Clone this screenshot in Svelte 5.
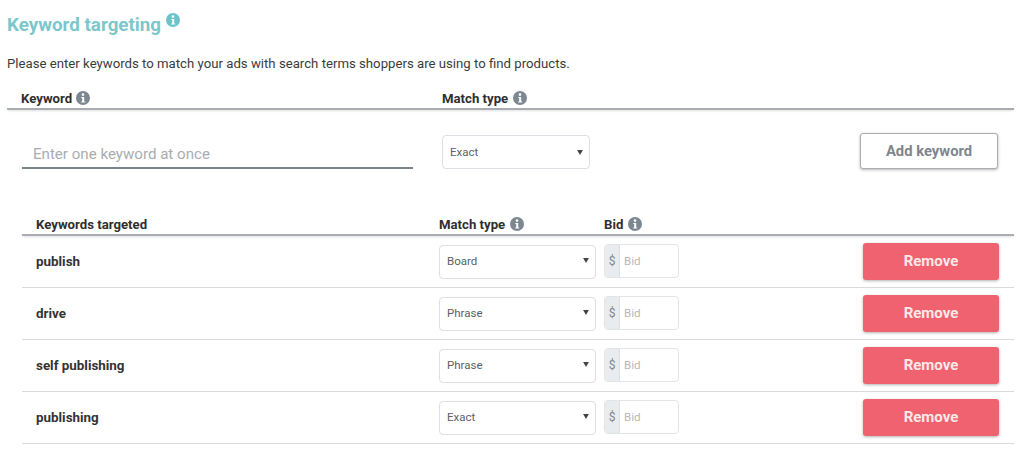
<script>
  const rows = [
    { name: 'publish', match: 'Board' },
    { name: 'drive', match: 'Phrase' },
    { name: 'self publishing', match: 'Phrase' },
    { name: 'publishing', match: 'Exact' }
  ];
</script>

{#snippet info(cls)}
  <svg class="info {cls}" viewBox="0 0 14 14" aria-hidden="true">
    <circle cx="7" cy="7" r="7" fill="currentColor" />
    <circle cx="7" cy="3.6" r="1.3" fill="#fff" />
    <path d="M5.3 6h2.9v4.4h1v1.1H5.2v-1.1h1V7.1h-.9z" fill="#fff" />
  </svg>
{/snippet}

{#snippet select(value, cls)}
  <div class="select {cls}">
    <span>{value}</span>
    <svg class="caret" viewBox="0 0 7 6" aria-hidden="true"><path d="M0 0h7L3.5 6z" fill="#444" /></svg>
  </div>
{/snippet}

<main class="page">
  <h1>Keyword targeting {@render info('teal')}</h1>
  <p class="lead">Please enter keywords to match your ads with search terms shoppers are using to find products.</p>

  <div class="head-top">
    <div class="th kw">Keyword {@render info('grey')}</div>
    <div class="th">Match type {@render info('grey')}</div>
  </div>

  <div class="entry">
    <div class="kw-input">Enter one keyword at once</div>
    {@render select('Exact', 'top-select')}
    <button class="add">Add keyword</button>
  </div>

  <section class="table">
    <div class="row-head">
      <div class="th name">Keywords targeted</div>
      <div class="th">Match type {@render info('grey')}</div>
      <div class="th">Bid {@render info('grey')}</div>
    </div>
    {#each rows as r}
      <div class="row">
        <div class="name strong">{r.name}</div>
        {@render select(r.match, 'row-select')}
        <div class="bid">
          <span class="dollar">$</span>
          <span class="bid-ph">Bid</span>
        </div>
        <button class="remove">Remove</button>
      </div>
    {/each}
  </section>
</main>

<style>
  :global(body) {
    margin: 0;
    background: #fff;
    font-family: Roboto, "Liberation Sans", sans-serif;
  }
  .page {
    width: 1024px;
    height: 458px;
    box-sizing: border-box;
    padding: 13px 10px 0 7px;
    overflow: hidden;
    color: #333;
  }
  h1 {
    margin: 0;
    font-size: 18.8px;
    line-height: 22px;
    font-weight: 700;
    color: #7cc7cc;
  }
  h1 .info {
    width: 14px;
    height: 14px;
    vertical-align: 4px;
    margin-left: 0;
  }
  .info {
    display: inline-block;
    width: 14px;
    height: 14px;
    vertical-align: -2px;
    margin-left: 1px;
  }
  .teal { color: #6cc3c9; }
  .grey { color: #7c8792; }
  .lead {
    margin: 20px 0 0;
    font-size: 13.2px;
    line-height: 16px;
    color: #3c3c3c;
  }
  .th {
    font-size: 13.2px;
    font-weight: 700;
    color: #2f2f2f;
  }
  .head-top {
    display: grid;
    grid-template-columns: 421px 1fr;
    margin-top: 18px;
    padding: 0 0 1px 14px;
    height: 17px;
    line-height: 17px;
    border-bottom: 2px solid #a9adb2;
    box-shadow: 0 2px 2px -1px rgba(0, 0, 0, .12);
  }
  .entry {
    display: flex;
    align-items: center;
    margin-top: 24px;
    padding-left: 15px;
    height: 36px;
  }
  .kw-input {
    box-sizing: border-box;
    width: 391px;
    height: 34px;
    padding: 9px 0 0 11px;
    font-size: 15.1px;
    line-height: 20px;
    color: #a9adb1;
    border-bottom: 2px solid #7c828a;
  }
  .select {
    box-sizing: border-box;
    display: flex;
    align-items: center;
    justify-content: space-between;
    background: #fff;
    border: 1px solid #dcdfe3;
    border-radius: 4px;
    font-size: 11.5px;
    color: #5c6168;
  }
  .caret {
    width: 6px;
    height: 5px;
  }
  .top-select {
    width: 148px;
    height: 34px;
    margin-left: 29px;
    padding: 0 6px 0 7px;
  }
  .add {
    box-sizing: border-box;
    width: 138px;
    height: 36px;
    margin-left: auto;
    margin-right: 16px;
    margin-top: -2px;
    background: #fff;
    border: 1px solid #a9adb2;
    border-radius: 3px;
    box-shadow: 0 1px 3px rgba(0, 0, 0, .3);
    font: 700 14.8px Roboto, sans-serif;
    color: #7f868e;
  }
  .table {
    margin: 46px 0 0 15px;
  }
  .row-head, .row {
    display: grid;
    grid-template-columns: 417px 157px 8px 75px 1fr;
    align-items: center;
  }
  .row-head {
    height: 18px;
    border-bottom: 2px solid #a9adb2;
    box-shadow: 0 2px 2px -1px rgba(0, 0, 0, .12);
    grid-template-columns: 417px 165px 1fr;
    line-height: 17px;
    align-items: start;
  }
  .name {
    padding-left: 14px;
  }
  .row {
    height: 51px;
    border-bottom: 1px solid #d8dade;
  }
  .strong {
    font-size: 13.4px;
    font-weight: 700;
    color: #333;
  }
  .row-select {
    grid-column: 2;
    height: 34px;
    padding: 0 6px 2px 7px;
  }
  .bid {
    grid-column: 4;
    box-sizing: border-box;
    height: 34px;
    display: flex;
    align-items: center;
    border: 1px solid #e2e5e8;
    border-radius: 4px;
    overflow: hidden;
    margin-top: -2px;
    font-size: 11.5px;
  }
  .dollar {
    width: 14px;
    height: 100%;
    display: flex;
    align-items: center;
    justify-content: center;
    background: #e9ecef;
    border-right: 1px solid #dcdfe3;
    color: #7c8792;
    font-size: 12px;
  }
  .bid-ph {
    padding-left: 4px;
    color: #b4b8bd;
  }
  .remove {
    grid-column: 5;
    justify-self: end;
    width: 136px;
    height: 37px;
    margin-right: 15px;
    margin-top: -1px;
    border: 0;
    border-radius: 3px;
    background: #f0626f;
    box-shadow: 0 1px 3px rgba(0, 0, 0, .3);
    color: #fbe9ea;
    font: 700 15px Roboto, sans-serif;
  }
</style>
